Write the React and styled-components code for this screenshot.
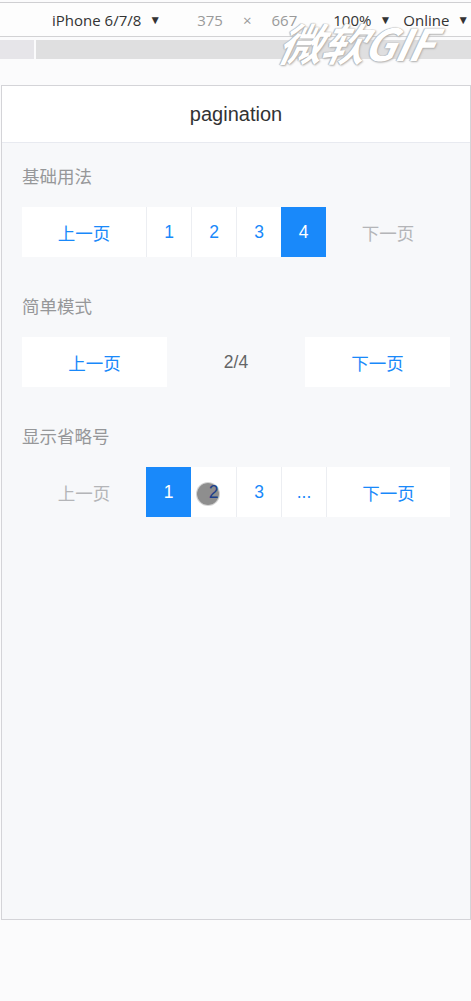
import React from "react";
import styled, { createGlobalStyle } from "styled-components";

const GlobalStyle = createGlobalStyle`
  html, body {
    margin: 0;
    padding: 0;
    background: #fbfbfc;
  }
  body {
    font-family: "Liberation Sans", "Noto Sans CJK SC", Arial, sans-serif;
  }
`;

const Screen = styled.div`
  position: relative;
  width: 471px;
  height: 1001px;
  overflow: hidden;
  background: #fbfbfc;
`;

//Devtools chrome
const Toolbar = styled.div`
  display: flex;
  align-items: center;
  height: 33px;
  margin-top: 2px;
  border-top: 1px solid #cfcfd2;
  border-bottom: 1px solid #d2d2d4;
  background: #fdfdfd;
  font-family: "Open Sans", "Liberation Sans", sans-serif;
  font-size: 15px;
  color: #333;
  padding-left: 52px;
  white-space: nowrap;
`;

const ToolText = styled.span`
  color: ${(p) => (p.muted ? "#9a9a9a" : "#333")};
  margin-left: ${(p) => p.gap || 0}px;
  font-size: ${(p) => p.size || 15}px;
`;

const Ruler = styled.div`
  display: flex;
  height: 19px;
  margin-top: 3px;
  gap: 2px;
`;

const RulerPart = styled.div`
  background: ${(p) => (p.light ? "#e6e5e9" : "#dfdfe0")};
  width: ${(p) => (p.w ? `${p.w}px` : "auto")};
  flex: ${(p) => (p.w ? "none" : 1)};
`;

const Watermark = styled.div`
  position: absolute;
  left: 280px;
  top: 10px;
  font-family: "Noto Sans CJK SC", "DejaVu Sans", sans-serif;
  font-size: 44px;
  font-weight: 700;
  font-style: italic;
  color: #ffffff;
  letter-spacing: -1px;
  transform: skewX(-12deg);
  text-shadow: 0 0 1px #9a9a9a, 1px 1px 2px #b0b0b0, -1px 0 1px #c0c0c0;
`;

//Device frame
const Device = styled.div`
  margin: 26px 0 0 1px;
  width: 468px;
  height: 833px;
  border: 1px solid #d4d4d8;
  background: #f7f8fa;
`;

const NavBar = styled.div`
  display: flex;
  align-items: center;
  justify-content: center;
  height: 56px;
  background: #fff;
  border-bottom: 1px solid #e8eaf0;
  font-size: 20px;
  color: #323233;
`;

const Section = styled.div`
  padding: 0 20px;
`;

const SectionTitle = styled.h2`
  margin: 0;
  padding: ${(p) => (p.first ? 24 : 40)}px 0 20px 0;
  font-size: 17.5px;
  line-height: 20px;
  font-weight: 400;
  color: #969799;
`;

const Pager = styled.ul`
  display: flex;
  margin: 0;
  padding: 0;
  list-style: none;
  height: 50px;
`;

const Item = styled.li`
  position: relative;
  display: flex;
  align-items: center;
  justify-content: center;
  box-sizing: border-box;
  width: ${(p) => p.w}px;
  flex: none;
  font-size: 17.5px;
  background: ${(p) => (p.active ? "#1989fa" : p.disabled ? "transparent" : "#fff")};
  color: ${(p) => (p.active ? "#fff" : p.disabled ? "#b4b5b8" : "#1989fa")};
  border-left: ${(p) => (p.divider ? "1px solid #eceef2" : "none")};
`;

const PageDesc = styled.li`
  flex: 1;
  display: flex;
  align-items: center;
  justify-content: center;
  font-size: 17.5px;
  color: #646566;
`;

const TouchCursor = styled.span`
  position: absolute;
  left: 6px;
  top: 16px;
  width: 22px;
  height: 22px;
  border-radius: 50%;
  background: rgba(110, 110, 110, 0.78);
  box-shadow: 0 0 0 1px rgba(200, 200, 200, 0.8);
`;

const ItemLabel = styled.span`
  position: relative;
  color: ${(p) => p.color || "inherit"};
`;

function App() {
  return (
    <Screen>
      <GlobalStyle />
      <Toolbar>
        <ToolText>iPhone 6/7/8</ToolText>
        <ToolText size={12} gap={8}>▼</ToolText>
        <ToolText muted gap={36}>375</ToolText>
        <ToolText muted gap={20}>×</ToolText>
        <ToolText muted gap={20}>667</ToolText>
        <ToolText gap={36}>100%</ToolText>
        <ToolText size={12} gap={8}>▼</ToolText>
        <ToolText gap={12}>Online</ToolText>
        <ToolText size={12} gap={8}>▼</ToolText>
      </Toolbar>
      <Ruler>
        <RulerPart light w={34} />
        <RulerPart />
      </Ruler>
      <Watermark>微软GIF</Watermark>

      <Device>
        <NavBar>pagination</NavBar>

        <Section>
          <SectionTitle first>基础用法</SectionTitle>
          <Pager>
            <Item w={124}>上一页</Item>
            <Item w={45} divider>1</Item>
            <Item w={45} divider>2</Item>
            <Item w={45} divider>3</Item>
            <Item w={45} active>4</Item>
            <Item w={124} disabled>下一页</Item>
          </Pager>
        </Section>

        <Section>
          <SectionTitle>简单模式</SectionTitle>
          <Pager>
            <Item w={145}>上一页</Item>
            <PageDesc>2/4</PageDesc>
            <Item w={145}>下一页</Item>
          </Pager>
        </Section>

        <Section>
          <SectionTitle>显示省略号</SectionTitle>
          <Pager>
            <Item w={124} disabled>上一页</Item>
            <Item w={45} active>1</Item>
            <Item w={45}>
              <TouchCursor />
              <ItemLabel color="#1d3f8a">2</ItemLabel>
            </Item>
            <Item w={45} divider>3</Item>
            <Item w={45} divider>...</Item>
            <Item w={124} divider>下一页</Item>
          </Pager>
        </Section>
      </Device>
    </Screen>
  );
}

export default App;
